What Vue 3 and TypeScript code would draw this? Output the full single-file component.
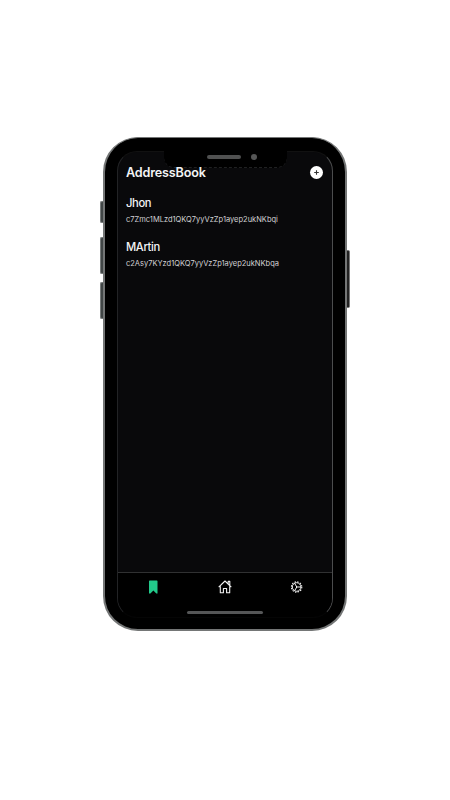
<script setup lang="ts">
interface Contact {
  name: string
  address: string
}

const contacts: Contact[] = [
  { name: 'Jhon', address: 'c7Zmc1MLzd1QKQ7yyVzZp1ayep2ukNKbqi' },
  { name: 'MArtin', address: 'c2Asy7KYzd1QKQ7yyVzZp1ayep2ukNKbqa' },
]
</script>

<template>
  <main class="stage">
    <div class="phone">
      <i class="side mute"></i>
      <i class="side volume-up"></i>
      <i class="side volume-down"></i>
      <i class="side power"></i>
      <div class="body">
        <section class="screen">
          <header class="header">
            <h1>AddressBook</h1>
            <button class="add" aria-label="Add contact">
              <svg viewBox="0 0 13 13"><path d="M6.5 4.2v4.6M4.2 6.5h4.6" /></svg>
            </button>
          </header>
          <ul class="contacts">
            <li v-for="contact in contacts" :key="contact.address">
              <h2>{{ contact.name }}</h2>
              <p>{{ contact.address }}</p>
            </li>
          </ul>
          <footer class="footer">
            <nav class="tabs">
              <svg class="bookmark" viewBox="0 0 16 16">
                <path d="M3 2.2q0-.7.7-.7h7.1q.7 0 .7.7v12.3h-1.2L7.4 11.6 4.4 14.5H3z" />
              </svg>
              <svg class="line" viewBox="0 0 16 16">
                <path d="M1.7 8.2 8 2l6.3 6.2M11.2 4.8V2.4h1.6v4M3.3 7.2v6.5h3.1V9.5h3.2v4.2h3.1V7.2" />
              </svg>
              <svg class="line gear" viewBox="0 0 16 16">
                <circle cx="8.6" cy="8" r="4.3" />
                <circle class="teeth" cx="8.6" cy="8" r="5.2" />
                <path d="M8.8 8h4M8.8 8 6.6 4.3M8.8 8 6.6 11.7" />
              </svg>
            </nav>
            <span class="home-bar"></span>
          </footer>
        </section>
        <div class="notch"><span class="speaker"></span><span class="camera"></span></div>
      </div>
    </div>
  </main>
</template>

<style>
body {
  background: #fff;
}
</style>

<style scoped>
* {
  box-sizing: border-box;
}
.stage {
  height: 800px;
  padding: 137px 0 0 103px;
  overflow: hidden;
  font-family: Inter, "Liberation Sans", sans-serif;
}
.phone {
  position: relative;
  width: 244px;
  height: 494px;
}
.body {
  position: relative;
  height: 100%;
  padding: 13px 12px 11px 12px;
  border: 2px solid #747676;
  border-top-width: 1px;
  border-radius: 35px;
  background: #000;
}
.side {
  position: absolute;
  left: -3px;
  width: 5px;
  border: 1px solid #777b7b;
  border-right: 0;
  border-radius: 2px 0 0 2px;
  background: #414646;
}
.mute {
  top: 64px;
  height: 22px;
}
.volume-up {
  top: 100px;
  height: 37px;
}
.volume-down {
  top: 145px;
  height: 37px;
}
.power {
  top: 113px;
  left: 242px;
  width: 5px;
  height: 58px;
  border: 1px solid #777;
  border-left: 0;
  border-radius: 0 2px 2px 0;
  background: #222;
}
.screen {
  display: flex;
  flex-direction: column;
  width: 216px;
  height: 467px;
  border: 1px solid #222325;
  border-right-color: #4b4c4d;
  border-top-color: #111;
  border-bottom-color: #050505;
  border-radius: 20px;
  background: #09090b;
  overflow: hidden;
}
.header {
  position: relative;
  z-index: 1;
  display: flex;
  align-items: center;
  justify-content: space-between;
  height: 26px;
  margin-top: 8px;
  padding: 0 9px 2px 8px;
}
h1,
h2,
p,
ul {
  margin: 0;
  padding: 0;
}
h1 {
  padding-top: 1px;
  color: #f4f4f5;
  font-size: 12.6px;
  font-weight: 600;
  letter-spacing: -0.16px;
  line-height: 20px;
}
.add {
  display: flex;
  width: 13px;
  height: 13px;
  padding: 0;
  border: 0;
  border-radius: 50%;
  background: #fff;
}
.add svg {
  width: 13px;
  height: 13px;
  fill: none;
  stroke: #333;
  stroke-width: 1.1;
}
.contacts {
  flex: 1;
  padding: 9px 8px 0;
  list-style: none;
}
li {
  height: 44px;
}
h2 {
  color: #f3f3f4;
  font-size: 11.2px;
  font-weight: 500;
  letter-spacing: -0.35px;
  line-height: 16px;
}
p {
  color: #d2d2d4;
  font-size: 7.5px;
  line-height: 12px;
  margin-top: 3px;
  white-space: nowrap;
}
.footer {
  display: flex;
  flex-direction: column;
  align-items: center;
  height: 45px;
  border-top: 1px solid #303132;
  background: #000;
}
.tabs {
  display: grid;
  grid-template-columns: repeat(3, 1fr);
  justify-items: center;
  width: 100%;
  padding-top: 6px;
}
.tabs svg {
  width: 16px;
  height: 16px;
}
.bookmark {
  fill: #22c98a;
}
.line {
  fill: none;
  stroke: #f2f2f2;
  stroke-width: 1.1;
  stroke-linejoin: round;
}
.gear {
  stroke-width: 1;
}
.teeth {
  stroke-width: 1.1;
  stroke-dasharray: 1.4 1.323;
}
.home-bar {
  width: 76px;
  height: 3px;
  margin-top: 16px;
  border-radius: 2px;
  background: #555657;
}
.notch {
  position: absolute;
  top: 13px;
  left: 59px;
  display: flex;
  align-items: center;
  gap: 10px;
  width: 123px;
  height: 17px;
  padding: 0 0 5px 43px;
  border-bottom: 1px dashed #202122;
  border-radius: 0 0 10px 10px;
  background: #000;
}
.speaker {
  width: 34px;
  height: 4px;
  border-radius: 2px;
  background: #505151;
}
.camera {
  width: 6px;
  height: 6px;
  border-radius: 50%;
  background: #555656;
}
</style>
